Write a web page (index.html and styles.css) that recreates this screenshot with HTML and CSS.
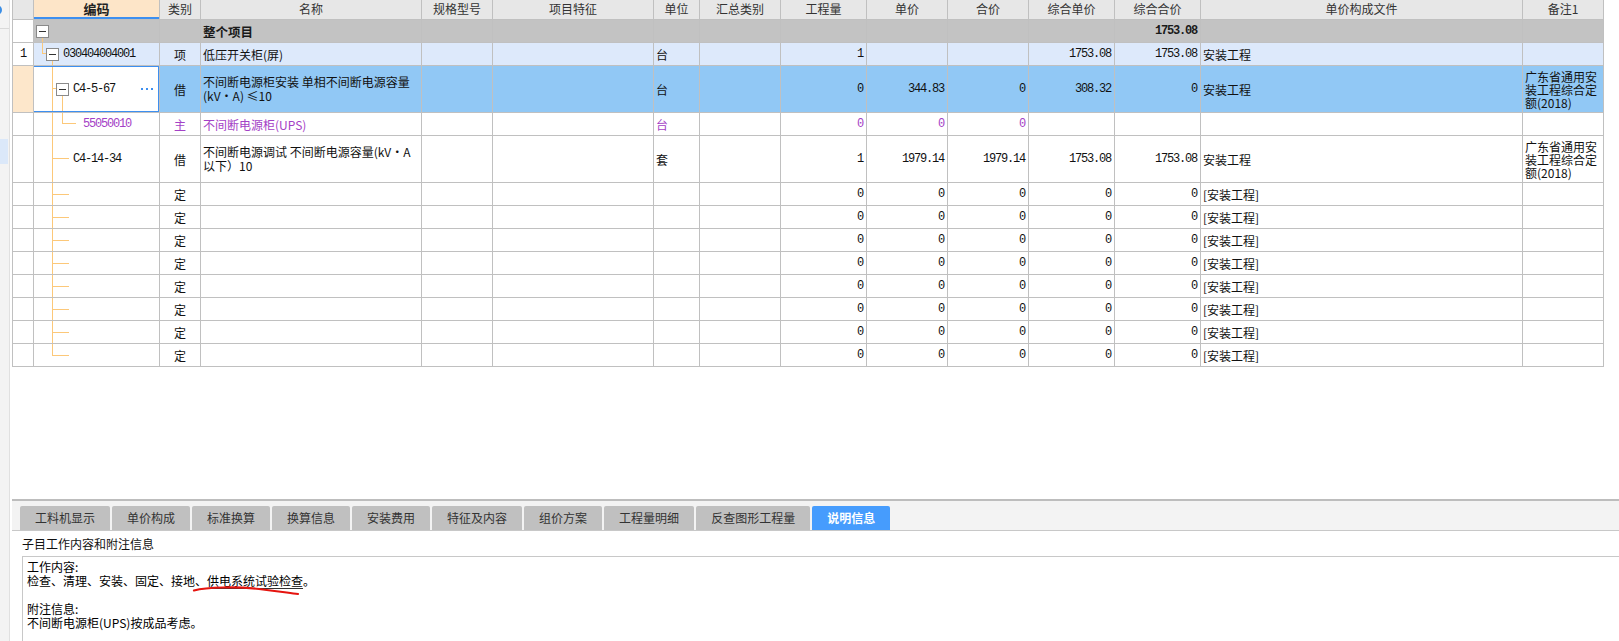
FILE: index.html
```html
<!DOCTYPE html>
<html lang="zh">
<head>
<meta charset="utf-8">
<title>分部分项</title>
<link rel="stylesheet" href="styles.css">
</head>
<body>
<div class="app">
  <aside class="side">
    <div class="side-top"><span class="side-dot"></span></div>
    <div class="side-sel"></div>
  </aside>
  <main class="main">
    <section class="grid-area">
      <div class="table">
        <div class="row hdr">
          <div class="c"></div>
          <div class="c ctr hl">编码</div>
          <div class="c ctr">类别</div>
          <div class="c ctr">名称</div>
          <div class="c ctr">规格型号</div>
          <div class="c ctr">项目特征</div>
          <div class="c ctr">单位</div>
          <div class="c ctr">汇总类别</div>
          <div class="c ctr">工程量</div>
          <div class="c ctr">单价</div>
          <div class="c ctr">合价</div>
          <div class="c ctr">综合单价</div>
          <div class="c ctr">综合合价</div>
          <div class="c ctr">单价构成文件</div>
          <div class="c ctr">备注1</div>
        </div>

        <div class="row h23 t-top">
          <div class="c idx"></div>
          <div class="c code"><span class="tb"></span></div>
          <div class="c"></div>
          <div class="c bold">整个项目</div>
          <div class="c"></div>
          <div class="c"></div>
          <div class="c"></div>
          <div class="c"></div>
          <div class="c"></div>
          <div class="c"></div>
          <div class="c"></div>
          <div class="c"></div>
          <div class="c num m bold">1753.08</div>
          <div class="c"></div>
          <div class="c"></div>
        </div>

        <div class="row h23 t-item">
          <div class="c idx m">1</div>
          <div class="c code"><span class="tb"></span><span class="m">030404004001</span></div>
          <div class="c ctr">项</div>
          <div class="c">低压开关柜(屏)</div>
          <div class="c"></div>
          <div class="c"></div>
          <div class="c">台</div>
          <div class="c"></div>
          <div class="c num m">1</div>
          <div class="c"></div>
          <div class="c"></div>
          <div class="c num m">1753.08</div>
          <div class="c num m">1753.08</div>
          <div class="c">安装工程</div>
          <div class="c"></div>
        </div>

        <div class="row h47 t-sel">
          <div class="c idx"></div>
          <div class="c code"><span class="tb"></span><span class="m">C4-5-67</span><svg class="dots" width="12" height="2" viewBox="0 0 12 2"><rect x="0" y="0" width="2" height="2"/><rect x="5" y="0" width="2" height="2"/><rect x="10" y="0" width="2" height="2"/></svg></div>
          <div class="c ctr">借</div>
          <div class="c wrap"><span>不间断电源柜安装 单相不间断电源容量<br>(kV・A) ≤10</span></div>
          <div class="c"></div>
          <div class="c"></div>
          <div class="c">台</div>
          <div class="c"></div>
          <div class="c num m">0</div>
          <div class="c num m">344.83</div>
          <div class="c num m">0</div>
          <div class="c num m">308.32</div>
          <div class="c num m">0</div>
          <div class="c">安装工程</div>
          <div class="c note"><span>广东省通用安装工程综合定额(2018)</span></div>
        </div>

        <div class="row h23 t-main purple">
          <div class="c idx"></div>
          <div class="c code"><span class="m">55050010</span></div>
          <div class="c ctr">主</div>
          <div class="c">不间断电源柜(UPS)</div>
          <div class="c"></div>
          <div class="c"></div>
          <div class="c">台</div>
          <div class="c"></div>
          <div class="c num m">0</div>
          <div class="c num m">0</div>
          <div class="c num m">0</div>
          <div class="c"></div>
          <div class="c"></div>
          <div class="c"></div>
          <div class="c"></div>
        </div>

        <div class="row h47 t-sub">
          <div class="c idx"></div>
          <div class="c code"><span class="m">C4-14-34</span></div>
          <div class="c ctr">借</div>
          <div class="c wrap"><span>不间断电源调试 不间断电源容量(kV・A<br>以下）10</span></div>
          <div class="c"></div>
          <div class="c"></div>
          <div class="c">套</div>
          <div class="c"></div>
          <div class="c num m">1</div>
          <div class="c num m">1979.14</div>
          <div class="c num m">1979.14</div>
          <div class="c num m">1753.08</div>
          <div class="c num m">1753.08</div>
          <div class="c">安装工程</div>
          <div class="c note"><span>广东省通用安装工程综合定额(2018)</span></div>
        </div>

        <div class="row h23 t-def">
          <div class="c idx"></div><div class="c code"></div><div class="c ctr">定</div><div class="c"></div><div class="c"></div><div class="c"></div><div class="c"></div><div class="c"></div>
          <div class="c num m">0</div><div class="c num m">0</div><div class="c num m">0</div><div class="c num m">0</div><div class="c num m">0</div><div class="c">[安装工程]</div><div class="c"></div>
        </div>
        <div class="row h23 t-def">
          <div class="c idx"></div><div class="c code"></div><div class="c ctr">定</div><div class="c"></div><div class="c"></div><div class="c"></div><div class="c"></div><div class="c"></div>
          <div class="c num m">0</div><div class="c num m">0</div><div class="c num m">0</div><div class="c num m">0</div><div class="c num m">0</div><div class="c">[安装工程]</div><div class="c"></div>
        </div>
        <div class="row h23 t-def">
          <div class="c idx"></div><div class="c code"></div><div class="c ctr">定</div><div class="c"></div><div class="c"></div><div class="c"></div><div class="c"></div><div class="c"></div>
          <div class="c num m">0</div><div class="c num m">0</div><div class="c num m">0</div><div class="c num m">0</div><div class="c num m">0</div><div class="c">[安装工程]</div><div class="c"></div>
        </div>
        <div class="row h23 t-def">
          <div class="c idx"></div><div class="c code"></div><div class="c ctr">定</div><div class="c"></div><div class="c"></div><div class="c"></div><div class="c"></div><div class="c"></div>
          <div class="c num m">0</div><div class="c num m">0</div><div class="c num m">0</div><div class="c num m">0</div><div class="c num m">0</div><div class="c">[安装工程]</div><div class="c"></div>
        </div>
        <div class="row h23 t-def">
          <div class="c idx"></div><div class="c code"></div><div class="c ctr">定</div><div class="c"></div><div class="c"></div><div class="c"></div><div class="c"></div><div class="c"></div>
          <div class="c num m">0</div><div class="c num m">0</div><div class="c num m">0</div><div class="c num m">0</div><div class="c num m">0</div><div class="c">[安装工程]</div><div class="c"></div>
        </div>
        <div class="row h23 t-def">
          <div class="c idx"></div><div class="c code"></div><div class="c ctr">定</div><div class="c"></div><div class="c"></div><div class="c"></div><div class="c"></div><div class="c"></div>
          <div class="c num m">0</div><div class="c num m">0</div><div class="c num m">0</div><div class="c num m">0</div><div class="c num m">0</div><div class="c">[安装工程]</div><div class="c"></div>
        </div>
        <div class="row h23 t-def">
          <div class="c idx"></div><div class="c code"></div><div class="c ctr">定</div><div class="c"></div><div class="c"></div><div class="c"></div><div class="c"></div><div class="c"></div>
          <div class="c num m">0</div><div class="c num m">0</div><div class="c num m">0</div><div class="c num m">0</div><div class="c num m">0</div><div class="c">[安装工程]</div><div class="c"></div>
        </div>
        <div class="row h23 t-def t-last">
          <div class="c idx"></div><div class="c code"></div><div class="c ctr">定</div><div class="c"></div><div class="c"></div><div class="c"></div><div class="c"></div><div class="c"></div>
          <div class="c num m">0</div><div class="c num m">0</div><div class="c num m">0</div><div class="c num m">0</div><div class="c num m">0</div><div class="c">[安装工程]</div><div class="c"></div>
        </div>
      </div>
    </section>

    <section class="panel">
      <nav class="tabs">
        <span class="tab">工料机显示</span>
        <span class="tab">单价构成</span>
        <span class="tab">标准换算</span>
        <span class="tab">换算信息</span>
        <span class="tab">安装费用</span>
        <span class="tab">特征及内容</span>
        <span class="tab">组价方案</span>
        <span class="tab">工程量明细</span>
        <span class="tab">反查图形工程量</span>
        <span class="tab on">说明信息</span>
      </nav>
      <div class="label">子目工作内容和附注信息</div>
      <div class="box">
        <p>工作内容:</p>
        <p>检查、清理、安装、固定、接地、<span class="ul">供电系统试验检查</span>。</p>
        <p>&nbsp;</p>
        <p>附注信息:</p>
        <p>不间断电源柜(UPS)按成品考虑。</p>
        <svg class="ink" width="300" height="45" viewBox="0 0 300 45"><path d="M171 33.5 C184 30 214 29.5 236 32 S266 36 275 37"/></svg>
      </div>
    </section>
  </main>
</div>
</body>
</html>
```

FILE: styles.css
```css
* { box-sizing: border-box; }
html, body { margin: 0; padding: 0; }
body {
  width: 1619px;
  height: 641px;
  overflow: hidden;
  background: #fff;
  font-family: "Noto Sans CJK SC", "Noto Sans", sans-serif;
  font-size: 12px;
  color: #111;
}
p { margin: 0; }

.app { display: flex; height: 641px; }

/* left strip */
.side {
  width: 10px;
  flex: none;
  background: #f3f3f3;
  border-right: 1px solid #e0e0e0;
  display: flex;
  flex-direction: column;
  overflow: hidden;
}
.side-top { height: 29px; border-bottom: 1px solid #d9d9d9; padding-top: 5px; }
.side-dot {
  display: block;
  width: 10px; height: 10px;
  border-radius: 50%;
  background: #3a8ee6;
  margin-left: -8px;
}
.side-sel { margin-top: 110px; width: 8px; height: 25px; background: #dbe8f9; }

.main {
  flex: 1;
  min-width: 0;
  margin-left: 2px;
  display: flex;
  flex-direction: column;
}

/* grid */
.grid-area { height: 499px; flex: none; }
.table { width: 1592px; border-left: 1px solid #c0c0c0; }
.row {
  display: grid;
  grid-template-columns: 21px 126px 41px 221px 71px 161px 46px 81px 86px 81px 81px 86px 86px 322px 81px;
}
.c {
  border-right: 1px solid #c0c0c0;
  border-bottom: 1px solid #c0c0c0;
  display: flex;
  align-items: center;
  padding: 0 2px;
  white-space: nowrap;
  overflow: hidden;
  min-width: 0;
}
.ctr { justify-content: center; }
.num { justify-content: flex-end; padding-right: 3px; }
.m { font-family: "Liberation Mono", monospace; letter-spacing: -1.2px; }
.bold { font-weight: bold; font-size: 12.5px; color: #1a1a1a; }
.num.bold { font-size: 12px; }
.c.idx { padding-left: 7px; }

.hdr .c {
  height: 20px;
  background: #e7e7e7;
  color: #333;
  padding-bottom: 2px;
}
.hdr .c.hl {
  background: #fde5c8;
  font-weight: bold;
  font-size: 13px;
  color: #222;
  box-shadow: inset 0 -2px 0 #3d8ff0;
}
.h23 .c { height: 23px; }
.h47 .c { height: 47px; }

.wrap { line-height: 14px; }
.note { white-space: normal; line-height: 13px; padding: 0 0 0 2px; }
.note span { display: block; }

/* row colours */
.t-top .c { background: #c3c3c3; }
.t-item .c { background: #dde9fb; }
.t-sel .c { background: #91c8f5; }
.row .c.idx { background: #fff; }
.t-sel .c.idx { background: #fde7cb; }
.purple .c { color: #a441c6; }

/* tree column */
.code { padding-right: 0; position: relative; --o: #fcc879; }
.tb {
  flex: none;
  width: 13px; height: 13px;
  border: 1px solid #8a8a8a;
  background: #fff;
  display: flex;
  align-items: center;
  justify-content: center;
  margin-right: 4px;
}
.tb::before { content: ""; width: 7px; height: 1px; background: #333; }

.t-top .c.code {
  padding-left: 2px;
  background:
    linear-gradient(var(--o), var(--o)) 8px 17px / 1px 6px no-repeat,
    #c3c3c3;
}
.t-item .c.code {
  padding-left: 12px;
  background:
    linear-gradient(var(--o), var(--o)) 8px 0 / 1px 11px no-repeat,
    linear-gradient(var(--o), var(--o)) 8px 10px / 4px 1px no-repeat,
    linear-gradient(var(--o), var(--o)) 18px 17px / 1px 6px no-repeat,
    #dde9fb;
}
.t-sel .c.code {
  padding-left: 22px;
  background:
    linear-gradient(var(--o), var(--o)) 18px 0 / 1px 100% no-repeat,
    linear-gradient(var(--o), var(--o)) 18px 22px / 4px 1px no-repeat,
    linear-gradient(var(--o), var(--o)) 28px 29px / 1px 18px no-repeat,
    #fff;
}
.t-sel .c.code::after {
  content: "";
  position: absolute;
  top: -1px; right: -1px; bottom: -1px; left: -2px;
  border: 2px solid #3d8ff0;
  pointer-events: none;
}
.dots { margin-left: auto; margin-right: 6px; fill: #3d8ff0; flex: none; }
.t-main .c.code {
  padding-left: 49px;
  background:
    linear-gradient(var(--o), var(--o)) 18px 0 / 1px 100% no-repeat,
    linear-gradient(var(--o), var(--o)) 28px 0 / 1px 11px no-repeat,
    linear-gradient(var(--o), var(--o)) 28px 10px / 14px 1px no-repeat,
    #fff;
}
.t-sub .c.code {
  padding-left: 39px;
  background:
    linear-gradient(var(--o), var(--o)) 18px 0 / 1px 100% no-repeat,
    linear-gradient(var(--o), var(--o)) 18px 22px / 17px 1px no-repeat,
    #fff;
}
.t-def .c.code {
  background:
    linear-gradient(var(--o), var(--o)) 18px 0 / 1px 100% no-repeat,
    linear-gradient(var(--o), var(--o)) 18px 11px / 17px 1px no-repeat,
    #fff;
}
.t-last .c.code {
  background:
    linear-gradient(var(--o), var(--o)) 18px 0 / 1px 12px no-repeat,
    linear-gradient(var(--o), var(--o)) 18px 11px / 17px 1px no-repeat,
    #fff;
}

/* bottom panel */
.panel {
  flex: 1;
  display: flex;
  flex-direction: column;
  border-top: 2px solid #bdbdbd;
  min-height: 0;
}
.tabs {
  display: flex;
  align-items: flex-end;
  gap: 2px;
  height: 30px;
  padding: 5px 0 0 8px;
  background: #f3f3f3;
  border-bottom: 1px solid #c8c8c8;
}
.tab {
  height: 24px;
  line-height: 24px;
  padding: 0 15px;
  background: #c0c0c0;
  border-radius: 2px 2px 0 0;
  color: #333;
  font-size: 12px;
}
.tab.on { background: #469cfd; color: #fff; font-weight: bold; }

.label {
  height: 25px;
  line-height: 25px;
  padding-left: 10px;
  color: #111;
}
.box {
  flex: 1;
  margin-left: 10px;
  border-top: 1px solid #c8c8c8;
  border-left: 1px solid #c8c8c8;
  padding: 3px 0 0 4px;
  line-height: 14px;
  color: #000;
  position: relative;
}
.ul { text-decoration: underline; text-decoration-color: #333; text-underline-offset: 2px; }
.ink {
  position: absolute;
  left: 0; top: 0;
  fill: none;
  stroke: #e5140f;
  stroke-width: 2.2;
  stroke-linecap: round;
}
```
